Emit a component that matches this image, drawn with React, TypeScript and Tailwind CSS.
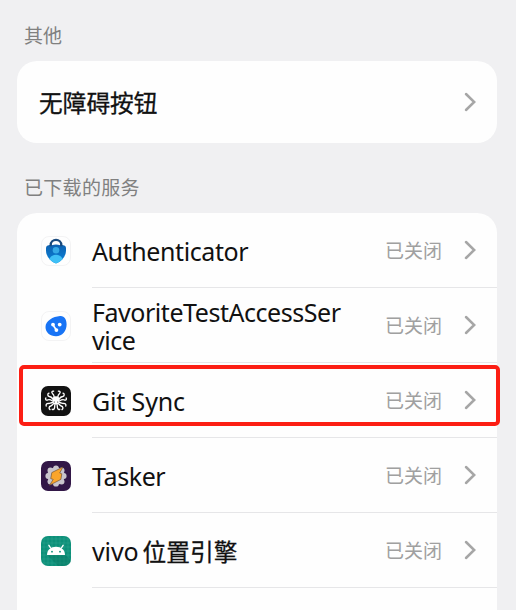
import type { ReactNode } from 'react';

function Chevron() {
  return (
    <svg className="h-[22px] w-[14px] shrink-0" viewBox="0 0 14 22" fill="none">
      <path d="M3 3L11.2 11L3 19" stroke="#a6a6a6" strokeWidth="2.5" strokeLinecap="round" strokeLinejoin="miter" />
    </svg>
  );
}

function AuthenticatorIcon() {
  return (
    <svg className="size-[30px]" viewBox="0 0 30 30">
      <defs>
        <linearGradient id="shield" x1="0" y1="0" x2="0" y2="1">
          <stop offset="0" stopColor="#0d5cab" />
          <stop offset="1" stopColor="#0b86dc" />
        </linearGradient>
        <clipPath id="shieldClip">
          <path d="M15 8C12.500 8 9.500 8.600 6.600 9.600Q5 10.200 5 12V14.500C5 20.500 9.500 24.800 13.600 27Q15 27.700 16.400 27C20.500 24.800 25 20.500 25 14.500V12Q25 10.200 23.400 9.600C20.500 8.600 17.500 8 15 8Z" />
        </clipPath>
      </defs>
      <rect x=".5" y=".5" width="29" height="29" rx="7.500" fill="#fefefe" stroke="#f3f3f4" />
      <g clipPath="url(#shieldClip)">
        <rect x="4" y="6" width="22" height="23" fill="url(#shield)" />
        <ellipse cx="15" cy="25" rx="7" ry="6.300" fill="#3fc0f6" />
        <circle cx="15" cy="14.200" r="3.300" fill="#35a9e6" />
      </g>
      <path d="M10.700 9.200a4.300 4.300 0 0 1 8.600 0Q15 7.700 10.700 9.200Z" fill="#fefefe" />
      <path d="M9.700 10.300V9a5.300 5.100 0 0 1 10.600 0V10.300" fill="none" stroke="#1a4a7d" strokeWidth="2.300" />
    </svg>
  );
}

function FavoriteIcon() {
  return (
    <svg className="size-[30px]" viewBox="0 0 30 30">
      <rect x=".5" y=".5" width="29" height="29" rx="7.500" fill="#fefefe" stroke="#f3f3f4" />
      <path d="M19 5C23.500 4.600 25.600 8.500 25.600 13.500C25.600 20 21.500 25.300 15 25.300C9 25.300 4.500 21.500 4.500 16C4.500 9.800 12 5.600 19 5Z" fill="#1874f5" />
      <path d="M12.200 14.200L15.200 18.800" stroke="#fff" strokeWidth="1.600" />
      <circle cx="12" cy="13.600" r="1.900" fill="#fff" />
      <circle cx="18.700" cy="13.600" r="1.900" fill="#fff" />
      <circle cx="15.400" cy="19.100" r="1.900" fill="#fff" />
    </svg>
  );
}

function GitSyncIcon() {
  return (
    <svg className="size-[30px]" viewBox="0 0 30 30">
      <rect width="30" height="30" rx="7" fill="#121212" />
      <g fill="none" stroke="#fff" strokeWidth="1.350" strokeLinecap="round">
        <path d="M13.400 12C13 9 12.500 8.200 11.500 7.600C10.200 6.500 11 4.800 12.600 5.200" />
        <path d="M16.600 12C17 9 17.500 8.200 18.500 7.600C19.800 6.500 19 4.800 17.400 5.200" />
        <path d="M12 13C10.500 11 9.700 10.700 8.300 10.500C6.400 10 6.300 7.700 8 7.200" />
        <path d="M18 13C19.500 11 20.300 10.700 21.700 10.500C23.600 10 23.700 7.700 22 7.200" />
        <path d="M11.500 15C9.500 13.700 8 13.300 6.600 14C5 14.500 4 13 4.900 11.900" />
        <path d="M18.500 15C20.500 13.700 22 13.300 23.400 14C25 14.500 26 13 25.100 11.900" />
        <path d="M12 16.500C10 16.500 9 17.400 7.700 17.500C5.900 17.200 4.600 18.300 5.200 20" />
        <path d="M18 16.500C20 16.500 21 17.400 22.300 17.500C24.100 17.200 25.400 18.300 24.800 20" />
        <path d="M13 17.500C11 18.500 11.200 19.500 9.700 20C7.900 20.500 7.500 22.500 9 23.600" />
        <path d="M17 17.500C19 18.500 18.800 19.500 20.300 20C22.100 20.500 22.500 22.500 21 23.600" />
        <path d="M14.200 18C13.300 19.500 14 20.500 13.500 22C13 23.500 12 24 11.200 23.200" />
        <path d="M15.800 18C16.700 19.500 16 20.500 16.500 22C17 23.500 18 24 18.800 23.200" />
      </g>
      <path d="M15 10.200C17.700 10.200 19 12 18.500 14.200C18.200 15.500 18.300 17 17.500 18.200H12.500C11.700 17 11.800 15.500 11.500 14.200C11 12 12.300 10.200 15 10.200Z" fill="#fff" />
      <circle cx="13.300" cy="16" r=".6" fill="#222" />
      <circle cx="16.700" cy="16" r=".6" fill="#222" />
    </svg>
  );
}

function TaskerIcon() {
  return (
    <svg className="size-[30px]" viewBox="0 0 30 30">
      <rect width="30" height="30" rx="7" fill="#321747" />
      <g fill="#c9c5cc">
        <circle cx="15" cy="15" r="8.700" />
        <circle cx="15" cy="7.300" r="2.900" />
        <circle cx="20.600" cy="9.400" r="2.900" />
        <circle cx="22.700" cy="15" r="2.900" />
        <circle cx="20.600" cy="20.600" r="2.900" />
        <circle cx="15" cy="22.700" r="2.900" />
        <circle cx="9.400" cy="20.600" r="2.900" />
        <circle cx="7.300" cy="15" r="2.900" />
        <circle cx="9.400" cy="9.400" r="2.900" />
      </g>
      <path d="M22 6L10.800 11.600L9.700 17.600L12.200 18.400L8.500 24.300L19.900 18.400L20.800 12.800L18.700 12Z" fill="#faa52c" stroke="#60462f" strokeWidth=".6" strokeLinejoin="round" />
    </svg>
  );
}

function VivoIcon() {
  return (
    <svg className="size-[30px]" viewBox="0 0 30 30">
      <defs>
        <clipPath id="tile">
          <rect width="30" height="30" rx="7" />
        </clipPath>
      </defs>
      <g clipPath="url(#tile)">
        <rect width="30" height="30" fill="#0c9079" />
        <path d="M3 0V30M7 0V30M11 0V30M15 0V30M19 0V30M23 0V30M27 0V30M0 3H30M0 7H30M0 11H30M0 15H30M0 19H30M0 23H30M0 27H30" stroke="#3ba794" strokeWidth=".4" />
        <path d="M6 18.800L17.200 30H30V24.600L24 18.500Z" fill="#08735f" opacity=".4" />
      </g>
      <path d="M9.600 12L7.900 9.300M20.400 12L22.100 9.300" stroke="#fff" strokeWidth="1.400" strokeLinecap="round" />
      <path d="M6 19C6 13.700 9.900 10.700 15 10.700S24 13.700 24 19Z" fill="#fff" />
      <circle cx="11" cy="15.700" r=".9" fill="#0c9079" />
      <circle cx="19" cy="15.700" r=".9" fill="#0c9079" />
    </svg>
  );
}

function ServiceRow({ icon, children }: { icon: ReactNode; children: ReactNode }) {
  return (
    <div className="flex h-[75px] pl-6">
      <div className="flex w-[51px] shrink-0 items-center">{icon}</div>
      <div className="flex flex-1 items-center border-b border-[#e6e6e8] pr-5">
        <div className="w-[254px] break-all pt-[2px] text-[25px] leading-[28px] tracking-[-0.4px] text-[#111]">{children}</div>
        <div className="ml-auto flex items-center gap-[21px]">
          <span className="whitespace-nowrap pt-[2px] text-[19px] leading-7 text-[#a0a0a0]">已关闭</span>
          <Chevron />
        </div>
      </div>
    </div>
  );
}

export default function App() {
  return (
    <div className="relative h-[610px] w-[516px] overflow-hidden bg-[#f0f0f2] px-[17px] pt-[21px] font-['Noto_Sans','Noto_Sans_CJK_SC',sans-serif]">
      <h2 className="h-10 pl-[7px] pt-px text-[19px] leading-7 text-[#808080]">其他</h2>
      <div className="mr-[2px] flex h-[82px] items-center justify-between rounded-[20px] bg-[#fefefe] pl-[22px] pr-5">
        <span className="pt-px text-[23.7px] leading-8 text-[#111] [-webkit-text-stroke:0.3px_#111]">无障碍按钮</span>
        <Chevron />
      </div>
      <h2 className="mt-[30px] h-10 pl-[7px] pt-px text-[19px] leading-7 tracking-[0.3px] text-[#808080]">已下载的服务</h2>
      <div className="mr-[2px] h-[420px] rounded-t-[20px] bg-[#fefefe]">
        <ServiceRow icon={<AuthenticatorIcon />}>Authenticator</ServiceRow>
        <ServiceRow icon={<FavoriteIcon />}><span className="tracking-[-0.46px]">FavoriteTestAccessService</span></ServiceRow>
        <ServiceRow icon={<GitSyncIcon />}><span className="tracking-[-0.15px]">Git Sync</span></ServiceRow>
        <ServiceRow icon={<TaskerIcon />}>Tasker</ServiceRow>
        <ServiceRow icon={<VivoIcon />}>
          <span className="tracking-[-0.1px]">vivo</span>
          <span className="ml-1 text-[23.7px] tracking-normal [-webkit-text-stroke:0.3px_#111]">位置引擎</span>
        </ServiceRow>
      </div>
      <div className="absolute left-[19px] top-[365px] h-[61px] w-[481px] rounded-[5px] border-4 border-[#fc1e14]" />
    </div>
  );
}
